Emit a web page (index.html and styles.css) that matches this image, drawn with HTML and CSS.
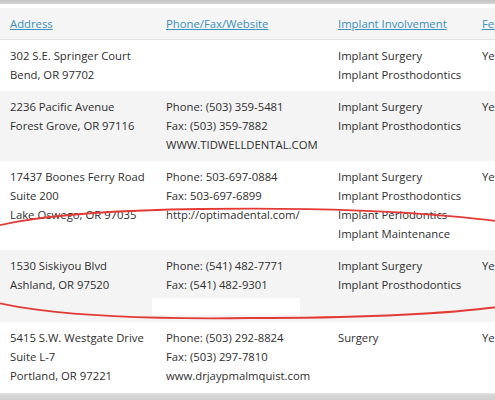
FILE: index.html
```html
<!DOCTYPE html>
<html lang="en">

<head>
    <meta charset="UTF-8">
    <meta name="viewport" content="width=device-width, initial-scale=1.0">
    <title>Implant Providers</title>
    <link rel="stylesheet" href="styles.css">
</head>

<body>
    <div class="shot">
        <div class="top-bar"></div>
        <div class="sheet">
            <table class="providers">
                <colgroup>
                    <col class="c-addr">
                    <col class="c-phone">
                    <col class="c-impl">
                    <col class="c-fee">
                </colgroup>
                <thead>
                    <tr>
                        <th><a href="#">Address</a></th>
                        <th><a href="#">Phone/Fax/Website</a></th>
                        <th><a href="#">Implant Involvement</a></th>
                        <th><a href="#">Fees</a></th>
                    </tr>
                </thead>
                <tbody>
                    <tr>
                        <td>302 S.E. Springer Court<br>Bend, OR 97702</td>
                        <td></td>
                        <td>Implant Surgery<br>Implant Prosthodontics</td>
                        <td>Yes</td>
                    </tr>
                    <tr class="alt">
                        <td>2236 Pacific Avenue<br>Forest Grove, OR 97116</td>
                        <td>Phone: (503) 359-5481<br>Fax: (503) 359-7882<br>WWW.TIDWELLDENTAL.COM</td>
                        <td>Implant Surgery<br>Implant Prosthodontics</td>
                        <td>Yes</td>
                    </tr>
                    <tr>
                        <td>17437 Boones Ferry Road<br>Suite 200<br>Lake Oswego, OR 97035</td>
                        <td>Phone: 503-697-0884<br>Fax: 503-697-6899<br>http://optimadental.com/</td>
                        <td>Implant Surgery<br>Implant Prosthodontics<br>Implant Periodontics<br>Implant Maintenance</td>
                        <td>Yes</td>
                    </tr>
                    <tr class="alt">
                        <td>1530 Siskiyou Blvd<br>Ashland, OR 97520</td>
                        <td>Phone: (541) 482-7771<br>Fax: (541) 482-9301<br><span class="blanked"></span></td>
                        <td>Implant Surgery<br>Implant Prosthodontics</td>
                        <td>Yes</td>
                    </tr>
                    <tr>
                        <td>5415 S.W. Westgate Drive<br>Suite L-7<br>Portland, OR 97221</td>
                        <td>Phone: (503) 292-8824<br>Fax: (503) 297-7810<br>www.drjaypmalmquist.com</td>
                        <td>Surgery</td>
                        <td>Yes</td>
                    </tr>
                </tbody>
            </table>
        </div>
        <div class="bottom-bar"></div>

        <!-- hand drawn circle round the Lake Oswego / Ashland rows -->
        <svg class="scribble" width="495" height="400" viewBox="0 0 495 400">
            <path d="M250 318 C100 320, -60 312, -60 265 C-60 222, 60 211, 200 209 C340 207, 600 213, 600 262 C600 310, 420 318, 250 318 Z" />
        </svg>
    </div>
</body>

</html>
```

FILE: styles.css
```css
html,
body {
    margin: 0;
    padding: 0;
    background: #fff;
}

.shot {
    position: relative;
    width: 495px;
    height: 400px;
    overflow: hidden;
    font-family: "Open Sans", "DejaVu Sans", sans-serif;
    font-size: 11.3px;
    color: #2f2f2f;
}

.top-bar {
    height: 4px;
    background: linear-gradient(#c4c4c4, #d6d6d6);
}

.sheet {
    padding-top: 4px;
    border-bottom: 1px solid #e0e0e0;
    padding-bottom: 1px;
}

.providers {
    border-collapse: collapse;
    table-layout: fixed;
    width: 572px;
}

.c-addr {
    width: 156px;
}

.c-phone {
    width: 172px;
}

.c-impl {
    width: 144px;
}

.c-fee {
    width: 100px;
}

.providers th {
    text-align: left;
    font-weight: normal;
    background: #f5f5f5;
    border-bottom: 1px solid #e3e3e3;
    padding: 6px 10px 6px 10px;
    line-height: 19px;
}

.providers th a {
    color: #3b8ec0;
    text-decoration: underline;
}

.providers td {
    vertical-align: top;
    padding: 6px 10px 7px 10px;
    line-height: 19px;
    white-space: nowrap;
}

.providers tr.alt td {
    background: #f4f4f4;
}

.blanked {
    display: inline-block;
    width: 148px;
    height: 17px;
    margin-left: -14px;
    vertical-align: -7px;
    background: #fff;
}

.bottom-bar {
    height: 10px;
    background: linear-gradient(#d9d9d9, #c8c8c8);
}

.scribble {
    position: absolute;
    left: 0;
    top: 0;
    pointer-events: none;
}

.scribble path {
    fill: none;
    stroke: #e23b36;
    stroke-width: 1.8;
}
```
